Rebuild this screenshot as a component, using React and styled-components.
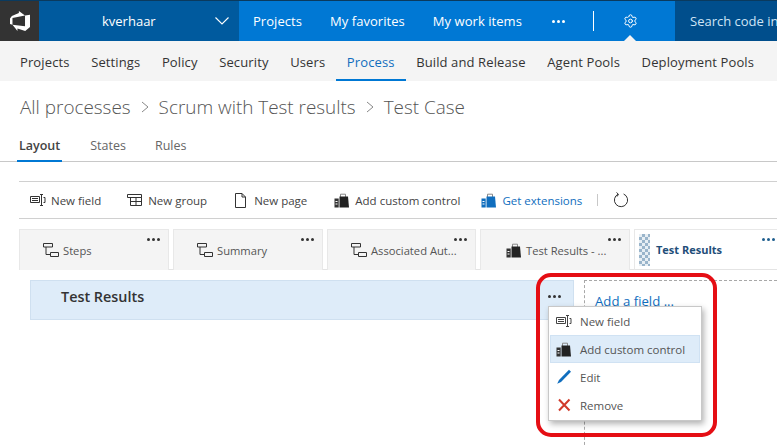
import React from "react";
import styled, { createGlobalStyle } from "styled-components";
import { Settings } from "lucide-react";

const Global = createGlobalStyle`
  html, body { margin: 0; padding: 0; background: #fff; overflow: hidden; }
  body { font-family: "Open Sans", "Noto Sans", sans-serif; width: 777px; height: 447px; }
  * { box-sizing: border-box; }
`;

const Page = styled.div`
  position: relative;
  width: 777px;
  height: 447px;
  overflow: hidden;
  color: #333;
`;

const TopBar = styled.header`
  display: flex;
  height: 41px;
  background: #0078d4;
  border-top: 1px solid #0a3a5e;
  color: #fff;
`;
const LogoCell = styled.div`
  width: 39px;
  background: #333;
  display: flex;
  align-items: center;
  justify-content: center;
`;
const Account = styled.div`
  width: 200px;
  background: #005a9e;
  display: flex;
  align-items: center;
  font-size: 13px;
  padding-left: 63px;
  padding-right: 10px;
  justify-content: space-between;
`;
const NavItems = styled.nav`
  flex: 1;
  display: flex;
  align-items: center;
  padding-left: 14px;
  font-size: 13px;
`;
const NavLink = styled.span`
  margin-right: ${p => p.$gap}px;
  white-space: nowrap;
  letter-spacing: 0.05px;
`;
const NavDots = styled.span`
  display: flex;
  gap: 2px;
  margin-right: 28px;
  & > i {
    width: 3px;
    height: 3px;
    border-radius: 50%;
    background: #fff;
  }
`;
const NavDivider = styled.span`
  width: 1px;
  height: 20px;
  background: #fff;
  margin-right: 29px;
`;
const SearchBox = styled.div`
  width: 102px;
  background: #004e8c;
  display: flex;
  align-items: center;
  padding-left: 15px;
  font-size: 13px;
  color: #cfe4f5;
  white-space: nowrap;
  overflow: hidden;
`;
const GearWrap = styled.span`
  position: relative;
  display: flex;
  width: 15px;
  justify-content: center;
  &::after {
    content: "";
    position: absolute;
    left: 1px;
    bottom: -12px;
    border: 6px solid transparent;
    border-top: 0;
    border-bottom-color: #f4f4f4;
  }
`;

const SubNav = styled.nav`
  height: 40px;
  background: #f4f4f4;
  display: flex;
  align-items: stretch;
  padding-left: 20px;
  gap: 21.6px;
  font-size: 13px;
  letter-spacing: 0.12px;
`;
const SubLink = styled.span`
  display: flex;
  align-items: center;
  white-space: nowrap;
  color: ${p => (p.$active ? "#106ebe" : "#333")};
  border-bottom: 2px solid ${p => (p.$active ? "#0078d4" : "transparent")};
  margin: ${p => (p.$active ? "0 -11px" : 0)};
  padding: 3px ${p => (p.$active ? "11px" : 0)} 0;
`;

const Breadcrumb = styled.h1`
  margin: 0;
  height: 52px;
  padding: 13px 0 0 20px;
  display: flex;
  align-items: flex-start;
  gap: 9px;
  font-size: 18.9px;
  font-weight: 300;
  line-height: 27px;
  color: #555;
  white-space: nowrap;
`;
const Chevron = styled.svg`
  width: 10px;
  height: 14px;
  margin-top: 6px;
  fill: none;
  stroke: #888;
`;

const Tabs = styled.div`
  display: flex;
  height: 29px;
  padding-left: 17px;
  border-bottom: 1px solid #c8c8c8;
  font-size: 12.5px;
`;
const Tab = styled.span`
  padding: 4px 2px 0;
  margin-right: ${p => p.$gap}px;
  height: 29px;
  color: ${p => (p.$active ? "#444" : "#666")};
  font-weight: ${p => (p.$active ? 600 : 400)};
  border-bottom: ${p => (p.$active ? "2px solid #0078d4" : "none")};
`;

const Workspace = styled.div`
  margin: 19px 0 0 19px;
`;
const Toolbar = styled.div`
  height: 38px;
  border-top: 1px solid #d0d0d0;
  border-bottom: 1px solid #d0d0d0;
  display: flex;
  align-items: center;
  padding-left: 11px;
  font-size: 11.5px;
`;
const ToolButton = styled.span`
  display: flex;
  align-items: center;
  gap: 5px;
  margin-right: ${p => p.$gap}px;
  color: ${p => (p.$link ? "#106ebe" : "#444")};
  white-space: nowrap;
  & > svg { flex: 0 0 16px; }
`;
const ToolDivider = styled.span`
  width: 1px;
  height: 12px;
  background: #c8c8c8;
  margin-right: 15px;
`;

const PageTabs = styled.div`
  display: flex;
  gap: 4px;
  margin-top: 10px;
  height: 41px;
  border-bottom: 1px solid #e4e4e4;
`;
const PageTab = styled.div`
  position: relative;
  flex: 0 0 ${p => p.$w}px;
  height: 41px;
  background: ${p => (p.$active ? "#fff" : "#f4f4f4")};
  border: 1px solid #e8e8e8;
  border-bottom: ${p => (p.$active ? "1px solid #e4e4e4" : "none")};
  display: flex;
  align-items: center;
  padding: 0 0 0 ${p => p.$pad}px;
  gap: 4px;
  font-size: ${p => (p.$active ? 11 : 11.2)}px;
  font-weight: ${p => (p.$active ? 700 : 400)};
  color: ${p => (p.$active ? "#1f4e79" : "#555")};
  white-space: nowrap;
`;
const Dots = styled.span`
  position: absolute;
  top: ${p => p.$top ?? 8}px;
  right: ${p => p.$right ?? 8}px;
  display: flex;
  gap: 2px;
  & > i {
    width: 3px;
    height: 3px;
    border-radius: 50%;
    background: ${p => p.$color || "#333"};
  }
`;
const Gripper = styled.span`
  position: absolute;
  left: 4px;
  top: 4px;
  width: 11px;
  height: 32px;
  background-image: conic-gradient(#9ab5cb 25%, #e8eff4 0 50%, #9ab5cb 0 75%, #e8eff4 0);
  background-size: 6px 6px;
`;

const Body = styled.div`
  display: flex;
  padding: 10px 0 0 11px;
`;
const GroupColumn = styled.div`
  flex: 0 0 544px;
`;
const GroupHeader = styled.div`
  position: relative;
  height: 40px;
  background: #deecf9;
  border: 1px solid #cfe0f0;
  display: flex;
  align-items: center;
  padding: 0 0 7px 30px;
  font-size: 14.4px;
  font-weight: 600;
  color: #333;
`;
const FieldColumn = styled.div`
  flex: 1;
  margin-left: 10px;
  height: 170px;
  border-top: 1px dashed #a8a8a8;
  border-left: 1px dashed #a8a8a8;
  padding: 11px 0 0 10px;
  font-size: 13.2px;
  color: #106ebe;
  white-space: nowrap;
`;

const Menu = styled.ul`
  position: absolute;
  left: 548px;
  top: 306px;
  width: 154px;
  height: 115px;
  margin: 0;
  padding: 0 1px;
  list-style: none;
  background: #fff;
  border: 1px solid #c8c8c8;
  box-shadow: 2px 3px 6px rgba(0, 0, 0, 0.3);
`;
const MenuItem = styled.li`
  height: 28px;
  display: flex;
  align-items: center;
  gap: 8px;
  padding-left: 5px;
  font-size: 11.5px;
  color: #555;
  background: ${p => (p.$hover ? "#deecf9" : "transparent")};
  border: 1px solid ${p => (p.$hover ? "#d0e2f3" : "transparent")};
  & > svg { flex: 0 0 16px; }
`;
const Annotation = styled.div`
  position: absolute;
  left: 536px;
  top: 273px;
  width: 181px;
  height: 164px;
  border: 4px solid #e50e14;
  border-radius: 15px;
  pointer-events: none;
`;

const Logo = () => (
  <svg width="20" height="20" viewBox="0 0 24 24">
    <path fill="#fff" d="M0 8.877L2.247 5.91l8.405-3.416V.022l7.37 5.393L2.966 8.338v8.225L0 15.707zm24-4.45v14.651l-5.753 4.9-9.303-3.057v3.056l-5.978-7.416 15.057 1.798V5.415z" />
  </svg>
);
const Caret = () => (
  <svg width="14" height="8" viewBox="0 0 14 8" fill="none" stroke="#fff" strokeWidth="1.1">
    <path d="M.5.5 7 7l6.5-6.5" />
  </svg>
);
const FieldIcon = ({ c = "#333" }) => (
  <svg width="16" height="14" viewBox="0 0 16 14" fill="none" stroke={c}>
    <path d="M.5 3.5h9v6h-9z" />
    <path d="M2 5.5h6M2 7.5h6" />
    <path d="M10 1.5h3M10 12.5h3M11.5 1.5v11" />
    <path d="M13.5 4.5h1.5v5h-1.5" />
  </svg>
);
const GroupIcon = () => (
  <svg width="16" height="14" viewBox="0 0 16 14" fill="none" stroke="#333">
    <path d="M.5 1.5h14v3h-14z" />
    <path d="M3.5 4.5h11v8h-11zM3.5 8.5h11M9 4.5v8" />
  </svg>
);
const PageIcon = () => (
  <svg width="16" height="15" viewBox="0 0 16 15" fill="none" stroke="#333">
    <path d="M2.5.5h6.5l3.5 3.5v10.5h-10zM9 .5V4h3.5" />
  </svg>
);
const BagIcon = ({ main = "#222", side = "#333" }) => (
  <svg width="16" height="15" viewBox="0 0 16 15">
    <path fill="none" stroke="#888" d="M6.5 4V1.2h5V4" />
    <path fill={main} d="M5.5 3.5h8.5l1 11H5.5z" />
    <rect x=".5" y="5.5" width="4.2" height="9" fill={side} />
    <path stroke="#fff" d="M1.5 8.5h2M1.5 11h2" />
  </svg>
);
const TreeIcon = () => (
  <svg width="16" height="15" viewBox="0 0 16 15" fill="none" stroke="#333">
    <path d="M.5.5h9v3.5h-9zM7.5 9.5h8v4h-8zM3 4v7.5h4.5" />
  </svg>
);
const Refresh = () => (
  <svg width="16" height="16" viewBox="0 0 16 16" fill="none" stroke="#333" strokeWidth="1">
    <path d="M5 2.2A6.6 6.6 0 1 0 10.6 2" />
    <path d="M3.5 .5 5.5 2.3 4 4.6" />
  </svg>
);
const Pencil = () => (
  <svg width="16" height="16" viewBox="0 0 16 16">
    <path fill="#106ebe" d="M13 .8 15 2.8 5 13 1.2 14.8 3 11Z" />
  </svg>
);
const Cross = () => (
  <svg width="16" height="16" viewBox="0 0 16 16" stroke="#d13a2a" strokeWidth="2" fill="none">
    <path d="M3 2.5 13.5 13.5M13.5 2.5 3 13.5" />
  </svg>
);
const ThreeDots = props => (
  <Dots {...props}>
    <i />
    <i />
    <i />
  </Dots>
);

const subItems = ["Projects", "Settings", "Policy", "Security", "Users", "Process", "Build and Release", "Agent Pools", "Deployment Pools"];

export default function App() {
  return (
    <Page>
      <Global />
      <TopBar>
        <LogoCell><Logo /></LogoCell>
        <Account>
          <span>kverhaar</span>
          <Caret />
        </Account>
        <NavItems>
          <NavLink $gap={28}>Projects</NavLink>
          <NavLink $gap={28}>My favorites</NavLink>
          <NavLink $gap={30}>My work items</NavLink>
          <NavDots><i /><i /><i /></NavDots>
          <NavDivider />
          <GearWrap><Settings size={16} strokeWidth={1.6} color="#fff" /></GearWrap>
        </NavItems>
        <SearchBox>Search code in</SearchBox>
      </TopBar>
      <SubNav>
        {subItems.map(s => (
          <SubLink key={s} $active={s === "Process"}>{s}</SubLink>
        ))}
      </SubNav>
      <Breadcrumb>
        <span>All processes</span>
        <Chevron viewBox="0 0 10 14"><path d="M2 2l6 5-6 5" /></Chevron>
        <span>Scrum with Test results</span>
        <Chevron viewBox="0 0 10 14"><path d="M2 2l6 5-6 5" /></Chevron>
        <span>Test Case</span>
      </Breadcrumb>
      <Tabs>
        <Tab $active $gap={26}>Layout</Tab>
        <Tab $gap={25}>States</Tab>
        <Tab>Rules</Tab>
      </Tabs>
      <Workspace>
        <Toolbar>
          <ToolButton $gap={26}><FieldIcon />New field</ToolButton>
          <ToolButton $gap={26}><GroupIcon />New group</ToolButton>
          <ToolButton $gap={27}><PageIcon />New page</ToolButton>
          <ToolButton $gap={21}><BagIcon />Add custom control</ToolButton>
          <ToolButton $link $gap={15}><BagIcon main="#106ebe" side="#106ebe" />Get extensions</ToolButton>
          <ToolDivider />
          <Refresh />
        </Toolbar>
        <PageTabs>
          <PageTab $w={150} $pad={23}><TreeIcon />Steps<ThreeDots /></PageTab>
          <PageTab $w={150} $pad={23}><TreeIcon />Summary<ThreeDots /></PageTab>
          <PageTab $w={149} $pad={23}><TreeIcon />Associated Aut...<ThreeDots /></PageTab>
          <PageTab $w={150} $pad={25}><BagIcon />Test Results - ...<ThreeDots /></PageTab>
          <PageTab $w={150} $pad={21} $active>
            <Gripper />Test Results
            <ThreeDots $color="#1f5f8f" $right={8} />
          </PageTab>
        </PageTabs>
        <Body>
          <GroupColumn>
            <GroupHeader>
              Test Results
              <ThreeDots $top={14} $right={12} />
            </GroupHeader>
          </GroupColumn>
          <FieldColumn>Add a field ...</FieldColumn>
        </Body>
      </Workspace>
      <Menu>
        <MenuItem><FieldIcon c="#444" />New field</MenuItem>
        <MenuItem $hover><BagIcon />Add custom control</MenuItem>
        <MenuItem><Pencil />Edit</MenuItem>
        <MenuItem><Cross />Remove</MenuItem>
      </Menu>
      <Annotation />
    </Page>
  );
}
